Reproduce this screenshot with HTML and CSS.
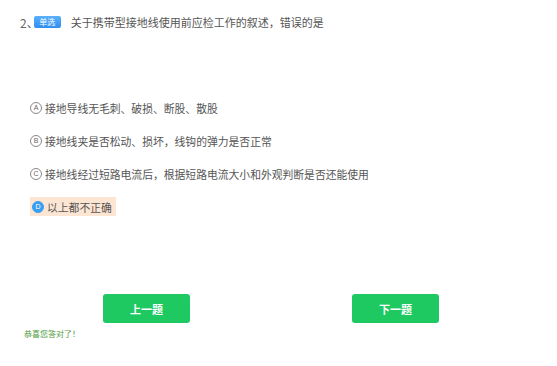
FILE: index.html
```html
<!DOCTYPE html>
<html lang="zh">
<head>
<meta charset="UTF-8">
<meta name="viewport" content="width=device-width, initial-scale=1.0">
<title>答题</title>
<link rel="stylesheet" href="styles.css">
</head>
<body>
<div class="quiz">
    <div class="question">
        <span class="num">2、</span>
        <span class="tag">单选</span>
        <span class="title">关于携带型接地线使用前应检工作的叙述，错误的是</span>
    </div>
    <ul class="options">
        <li class="option"><span class="mark">A</span>接地导线无毛刺、破损、断股、散股</li>
        <li class="option"><span class="mark">B</span>接地线夹是否松动、损坏，线钩的弹力是否正常</li>
        <li class="option"><span class="mark">C</span>接地线经过短路电流后，根据短路电流大小和外观判断是否还能使用</li>
        <li class="option picked"><span class="mark">D</span>以上都不正确</li>
    </ul>
    <div class="actions">
        <button class="btn">上一题</button>
        <button class="btn">下一题</button>
    </div>
    <p class="result">恭喜您答对了！</p>
</div>
</body>
</html>
```
FILE: styles.css
```css
body {
    margin: 0;
    background-color: #fff;
    font-family: "Noto Sans CJK SC", "Noto Sans", sans-serif;
    color: #555;
}

.quiz {
    padding: 14px 0 0 20px;
}

.question {
    display: flex;
    align-items: center;
    height: 16px;
    font-size: 11px;
}

.num {
    margin-right: -5px;
    font-size: 12px;
    color: #666;
}

.tag {
    display: inline-block;
    width: 27px;
    height: 12px;
    line-height: 12px;
    border-radius: 2px;
    background: linear-gradient(#5ab0fa, #2f8ef0);
    color: #fff;
    font-size: 8px;
    text-align: center;
}

.title {
    margin-left: 10px;
}

.options {
    list-style: none;
    margin: 68px 0 0 0;
    padding: 0;
}

.option {
    display: flex;
    align-items: center;
    width: fit-content;
    height: 19px;
    margin: 0 0 14px 10px;
    padding-right: 2px;
    font-size: 10.8px;
}

.mark {
    display: inline-flex;
    align-items: center;
    justify-content: center;
    width: 10px;
    height: 10px;
    margin-right: 3px;
    border: 1px solid #888;
    border-radius: 50%;
    font-family: "Liberation Sans", sans-serif;
    font-size: 7px;
    color: #666;
}

.option.picked {
    padding-right: 4px;
    background-color: #fde5d3;
}

.option.picked .mark {
    margin-left: 2px;
    border-color: #3a9ef2;
    background-color: #3a9ef2;
    color: #fff;
}

.actions {
    display: flex;
    gap: 162px;
    margin: 78px 0 0 83px;
}

.btn {
    width: 87px;
    height: 29px;
    border: none;
    border-radius: 3px;
    background-color: #1ec962;
    color: #fff;
    font-family: "Noto Sans CJK SC", sans-serif;
    font-size: 11px;
    font-weight: bold;
}

.result {
    margin: 5px 0 0 4px;
    font-size: 8px;
    color: #4c9a3a;
}
```
